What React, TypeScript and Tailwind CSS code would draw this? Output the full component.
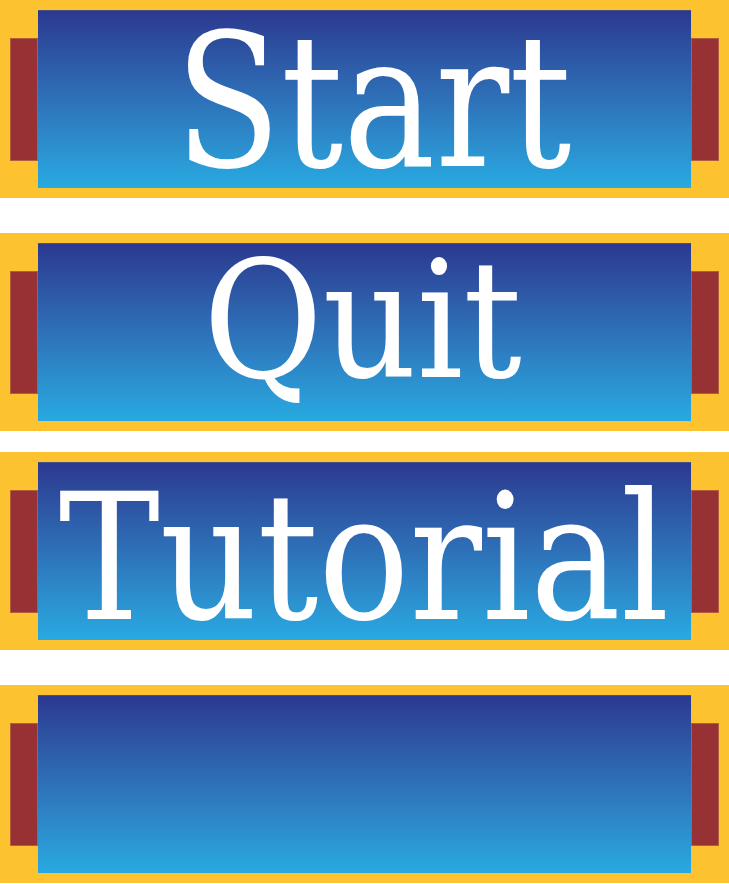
const buttons = [
  { label: "Start", text: "text-[185px] translate-x-[9px] translate-y-[3px] scale-x-[0.93]", mb: "mb-[35px]" },
  { label: "Quit", text: "text-[162px] -translate-x-[2px] -translate-y-[11px]", mb: "mb-[21px]" },
  { label: "Tutorial", text: "text-[176px] -translate-x-[1px] translate-y-[7px] scale-x-[0.957]", mb: "mb-[35px]" },
  { label: "", text: "text-[176px]", mb: "" },
];

function MenuButton({ label, text, mb }: { label: string; text: string; mb: string }) {
  return (
    <div className={`flex h-[198px] items-center bg-[#fdc22f] px-[10px] ${mb}`}>
      <div className="h-[123px] w-[28px] border border-[#b0603a] bg-[#983133]" />
      <div className="flex h-[178px] w-[653px] items-center justify-center border-t border-[#4a4f86] bg-gradient-to-b from-[#2b3990] to-[#27aae1]">
        <span
          className={`${text} whitespace-nowrap leading-[0.85] text-white`}
          style={{ fontFamily: '"DejaVu Serif Condensed", "DejaVu Serif", serif', fontStretch: "condensed" }}
        >
          {label}
        </span>
      </div>
      <div className="h-[123px] w-[28px] border border-[#b0603a] bg-[#983133]" />
    </div>
  );
}

export default function App() {
  return (
    <div className="flex h-[884px] w-[729px] flex-col bg-white">
      {buttons.map((b, i) => (
        <MenuButton key={i} {...b} />
      ))}
    </div>
  );
}
